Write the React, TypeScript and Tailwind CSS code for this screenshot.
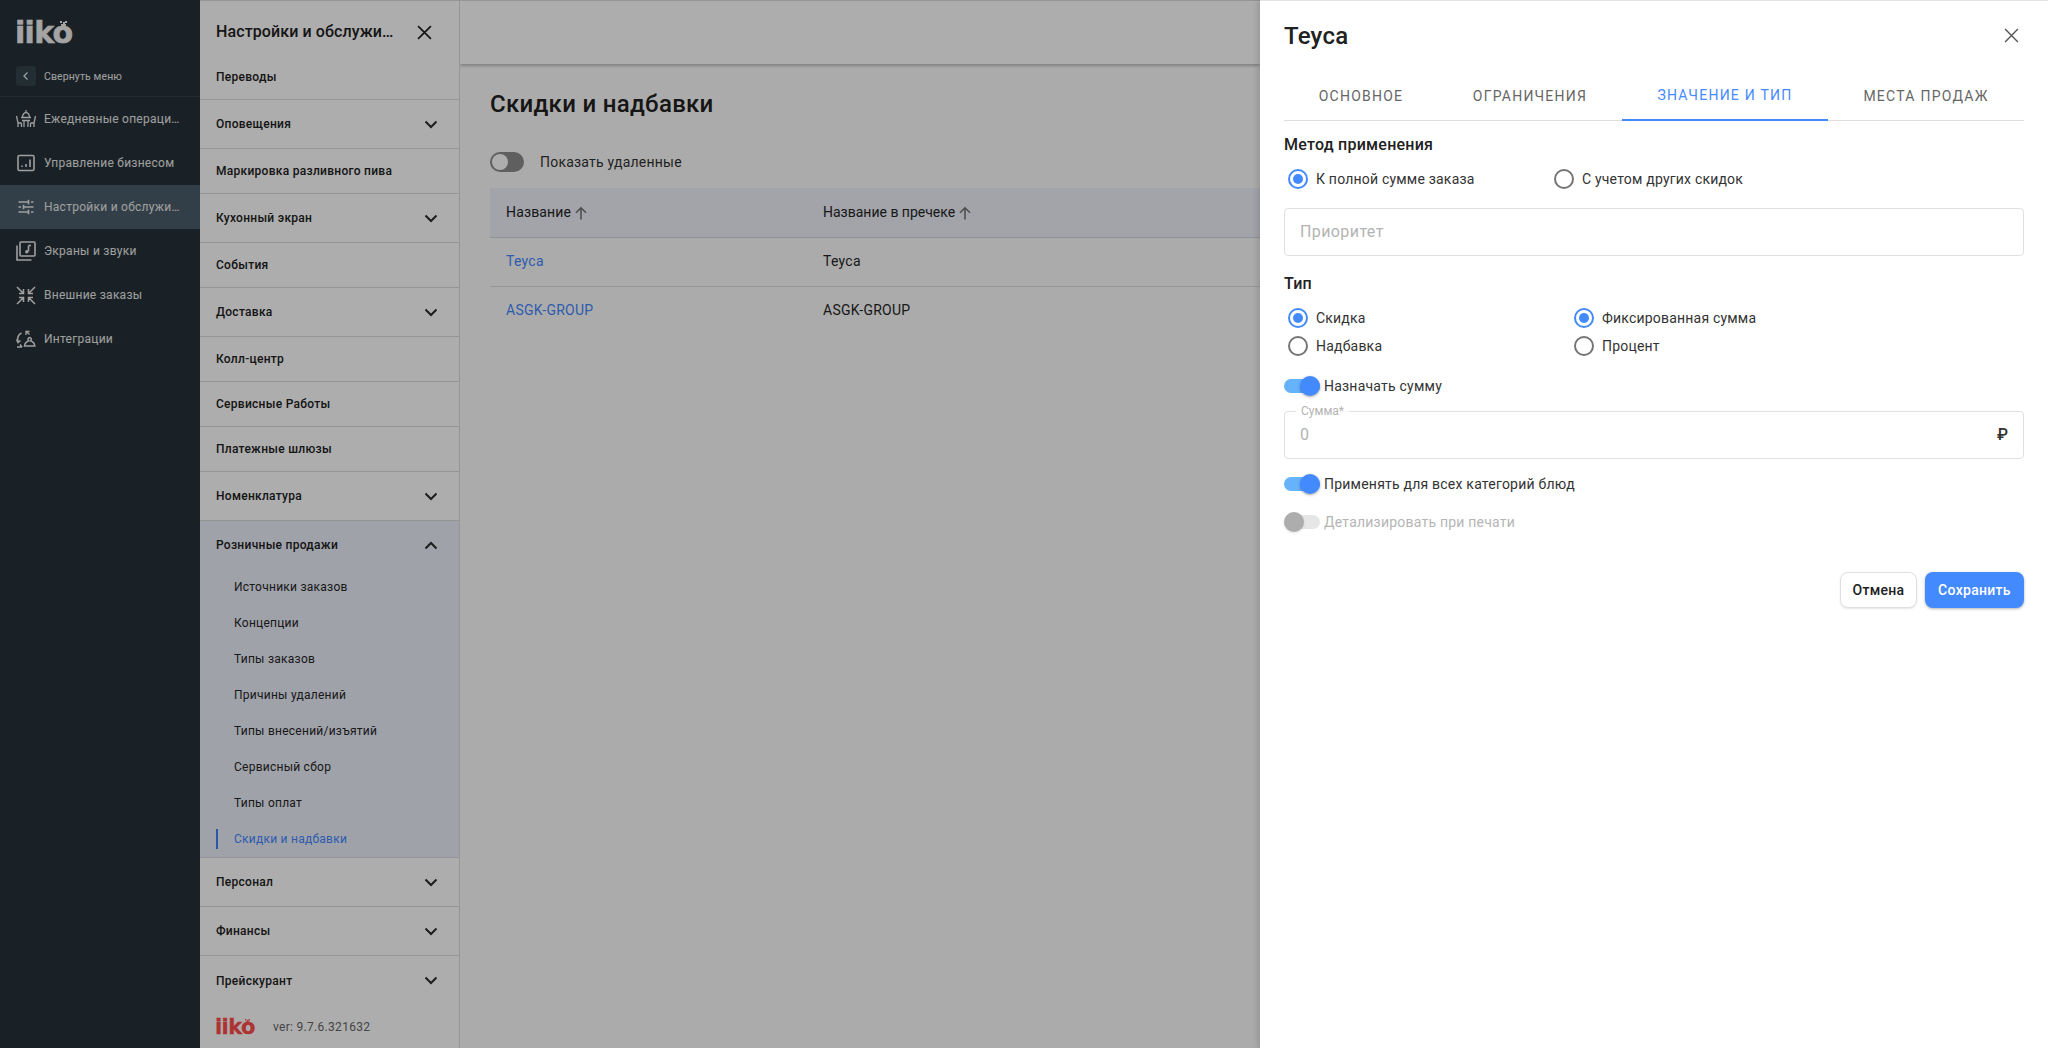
import React from "react";

function Logo({ small }: { small?: boolean }) {
  return (
    <div className={small ? "relative h-[16px] w-[38px] flex-none text-[#ff4c4c]" : "relative h-[24px] w-[57px] flex-none text-[#f2f2f2]"}>
      <span
        className={
          small
            ? "absolute -left-[1px] bottom-[-3px] text-[21px] leading-none font-bold font-['DejaVu_Sans'] tracking-[-0.6px] [-webkit-text-stroke:0.3px_currentColor]"
            : "absolute -left-[1px] bottom-[-4px] text-[30px] leading-none font-bold font-['DejaVu_Sans'] tracking-[-0.7px] [-webkit-text-stroke:0.5px_currentColor]"
        }
      >
        iiko
      </span>
      <svg className={small ? "absolute right-[4px] top-0" : "absolute right-[6px] top-[1px]"} width={small ? 5 : 7} height={small ? 6 : 8} viewBox="0 0 7 8" fill="currentColor">
        <rect x="0" y="0" width="2" height="2" /><rect x="3" y="1" width="2" height="2" /><rect x="5" y="0" width="2" height="2" />
        <rect x="1" y="3" width="5" height="2" /><rect x="2" y="5" width="3" height="3" />
      </svg>
    </div>
  );
}

const ic = { width: 20, height: 20, viewBox: "0 0 20 20", fill: "none", stroke: "currentColor", strokeWidth: 1.3 } as const;

const Icons: React.ReactNode[] = [
  <svg {...{ ...ic, width: 22, height: 22, viewBox: "0 0 22 22" }}>
    <path d="M11 2v2M7.5 9c0-2 1.5-4.5 3.5-4.5S14.5 7 14.5 9M6 9.5h10M7 12.5h8M1.5 8l1.5 7h3.5M20.5 8L19 15h-3.5M3 15v4M6.5 15v4M15.5 15v4M19 15v4M9 13v6M13 13v6" />
  </svg>,
  <svg {...ic}>
    <rect x="2" y="2.5" width="16" height="15" rx="1.5" strokeWidth="1.6" />
    <path d="M6 14v-1.5M10 14V11M14 14V6.5" strokeWidth="1.6" />
  </svg>,
  <svg {...ic}>
    <path d="M2.5 5h10M15 5h2.5M12.5 2.8v4.4M2.5 10h2.5M8 10h9.5M7.5 7.8v4.4M2.5 15h10M15 15h2.5M12.5 12.8v4.4" strokeWidth="1.6" />
  </svg>,
  <svg {...{ ...ic, width: 22, height: 22, viewBox: "0 0 22 22" }}>
    <rect x="5" y="2" width="15" height="14" rx="1" strokeWidth="1.6" />
    <path d="M2 5.5V20h14.5" strokeWidth="1.6" />
    <path d="M13.5 5.5v6" strokeWidth="1.6" />
    <path d="M13.5 5.5h2.5" strokeWidth="1.6" />
    <circle cx="11.8" cy="11.8" r="1.7" fill="currentColor" stroke="none" />
  </svg>,
  <svg {...{ ...ic, width: 22, height: 22, viewBox: "0 0 22 22" }}>
    <path d="M2 3l6.5 6.5M8.5 5v4.5H4M20 3l-6.5 6.5M13.5 5v4.5H18M2 20l6.5-6.5M8.5 18v-4.5H4M20 20l-6.5-6.5M13.5 18v-4.5H18" strokeWidth="1.5" />
  </svg>,
  <svg {...{ ...ic, width: 22, height: 22, viewBox: "0 0 22 22" }}>
    <path d="M6.5 5C3.5 6.5 2 10 3 14M1.5 11.5L3 14.5l2.5-2M2 19h5M7 19l-2-2.5" strokeWidth="1.5" />
    <path d="M11 7V3.5h3.5M11 3.5l3.5 3" strokeWidth="1.3" />
    <path d="M14.5 9.5a1.8 1.8 0 0 1 1 3.3c2.2.7 4 2.4 4.3 5.2H9.5c.3-2.8 2.1-4.5 4.3-5.2a1.8 1.8 0 0 1 .7-3.3z" strokeWidth="1.5" />
  </svg>,
];

const Chevron = ({ up }: { up?: boolean }) => (
  <svg width="14" height="9" viewBox="0 0 14 9" fill="none" stroke="#2b2b2b" strokeWidth="2">
    <path d={up ? "M1.5 7.5L7 2l5.5 5.5" : "M1.5 1.5L7 7l5.5-5.5"} />
  </svg>
);

const Cross = ({ size, stroke, w }: { size: number; stroke: string; w: number }) => (
  <svg width={size} height={size} viewBox="0 0 14 14" fill="none" stroke={stroke} strokeWidth={w}>
    <path d="M1 1l12 12M13 1L1 13" />
  </svg>
);

const Arrow = () => (
  <svg width="12" height="14" viewBox="0 0 12 14" fill="none" stroke="#757575" strokeWidth="1.6">
    <path d="M6 13.5V2M1 6.8L6 1.8l5 5" />
  </svg>
);

function Row({ label, chev, last }: { label: string; chev?: boolean; last?: boolean }) {
  return (
    <div className={`flex items-center justify-between pl-4 pr-[21px] flex-none ${chev ? "h-[49px]" : "h-[45px]"} ${last ? "" : "border-b border-[#dcdcdc]"}`}>
      <span className="text-[12px] font-medium tracking-[0.28px] text-[#212121]">{label}</span>
      {chev && <Chevron />}
    </div>
  );
}

function Radio({ on, label }: { on?: boolean; label: string }) {
  return (
    <div className="flex items-center h-7">
      <div className="w-7 h-7 flex items-center justify-center">
        <div className={`w-5 h-5 rounded-full border-2 flex items-center justify-center ${on ? "border-[#448aff]" : "border-[#757575]"}`}>
          {on && <div className="w-[10px] h-[10px] rounded-full bg-[#448aff]" />}
        </div>
      </div>
      <span className="ml-[4px] text-[14px] text-[#333] tracking-[0.2px]">{label}</span>
    </div>
  );
}

function Switch({ label, disabled }: { label: string; disabled?: boolean }) {
  return (
    <div className="flex items-center h-6">
      <div className={`w-9 h-[14px] rounded-full flex items-center ${disabled ? "bg-[#e6e6e6] justify-start" : "bg-[#66b3fb] justify-end"}`}>
        <div className={`w-5 h-5 rounded-full flex-none ${disabled ? "bg-[#adadad] shadow-sm" : "bg-[#448aff] shadow-[0_1px_3px_rgba(0,0,0,0.35)]"}`} />
      </div>
      <span className={`ml-[4px] text-[14px] tracking-[0.22px] ${disabled ? "text-[#b5b5b5]" : "text-[#333]"}`}>{label}</span>
    </div>
  );
}

const rail = ["Ежедневные операци…", "Управление бизнесом", "Настройки и обслужи…", "Экраны и звуки", "Внешние заказы", "Интеграции"];
const sub = ["Источники заказов", "Концепции", "Типы заказов", "Причины удалений", "Типы внесений/изъятий", "Сервисный сбор", "Типы оплат"];

export default function App() {
  return (
    <div className="flex w-[2048px] h-[1048px] overflow-hidden bg-white font-['Roboto','Liberation_Sans',sans-serif]">
      <div className="relative flex w-[1260px] flex-none h-full">
        {/* rail */}
        <aside className="w-[200px] flex-none bg-[#263238] flex flex-col text-[#eaeaea]">
          <div className="h-[66px] pl-4 pt-5 flex-none">
            <Logo />
          </div>
          <div className="h-[31px] flex-none border-b border-[#33434b] pl-4 flex items-start">
            <div className="w-5 h-5 rounded-[3px] bg-[#33454d] flex items-center justify-center">
              <svg width="8" height="10" viewBox="0 0 8 10" fill="none" stroke="#e8e8e8" strokeWidth="1.3"><path d="M5.5 1.5L2 5l3.5 3.5" /></svg>
            </div>
            <span className="ml-2 text-[10.5px] leading-5 pt-[1px] tracking-[0.1px]">Свернуть меню</span>
          </div>
          {rail.map((t, i) => (
            <div key={t} className={`h-[44px] flex-none flex items-center pl-4 ${i === 2 ? "bg-[#4b5e6b]" : ""}`}>
              <div className="w-[22px] h-[22px] flex items-center justify-center flex-none -ml-[1px] mr-[7px]">{Icons[i]}</div>
              <span className="whitespace-nowrap text-[12px] tracking-[0.26px]">{t}</span>
            </div>
          ))}
        </aside>

        {/* settings panel */}
        <nav className="w-[260px] flex-none bg-white border-r border-[#dcdcdc] border-t flex flex-col">
          <div className="h-[54px] flex-none flex items-center pt-2 pl-4 pr-[27px]">
            <span className="whitespace-nowrap text-[16px] font-medium tracking-[0.1px] text-[#212121]">Настройки и обслужи…</span>
            <div className="ml-auto"><Cross size={15} stroke="#212121" w={1.6} /></div>
          </div>
          <Row label="Переводы" />
          <Row label="Оповещения" chev />
          <Row label="Маркировка разливного пива" />
          <Row label="Кухонный экран" chev />
          <Row label="События" />
          <Row label="Доставка" chev />
          <Row label="Колл-центр" />
          <Row label="Сервисные Работы" />
          <Row label="Платежные шлюзы" />
          <Row label="Номенклатура" chev />
          <div className="flex-none bg-[#ebeffa] border-b border-[#dcdcdc]">
            <div className="h-[48px] flex items-center justify-between pl-4 pr-[21px]">
              <span className="text-[12px] font-medium tracking-[0.28px] text-[#212121]">Розничные продажи</span>
              <Chevron up />
            </div>
            {sub.map((s) => (
              <div key={s} className="h-9 flex items-center pl-[34px] text-[12px] tracking-[0.25px] text-[#262626]">{s}</div>
            ))}
            <div className="h-9 flex items-center pl-4">
              <div className="h-5 border-l-2 border-[#3f7ff0] pl-4 flex items-center text-[12px] tracking-[0.25px] text-[#4488ff]">Скидки и надбавки</div>
            </div>
          </div>
          <Row label="Персонал" chev />
          <Row label="Финансы" chev />
          <Row label="Прейскурант" chev last />
          <div className="flex-1 flex items-center pl-4">
            <Logo small />
            <span className="ml-[19px] text-[12px] tracking-[0.3px] text-[#666]">ver: 9.7.6.321632</span>
          </div>
        </nav>

        {/* main */}
        <main className="flex-1 min-w-0 bg-[#fdfdfd] overflow-hidden border-t border-[#dcdcdc] flex flex-col">
          <div className="h-[63px] flex-none bg-white shadow-[0_2px_3px_rgba(0,0,0,0.25)]" />
          <div className="pl-[30px] flex flex-col">
            <h1 className="mt-[23px] h-[34px] leading-[34px] text-[24px] font-medium tracking-[0.3px] text-[#212121]">Скидки и надбавки</h1>
            <div className="mt-[31px] h-5 flex items-center">
              <div className="w-[34px] h-5 rounded-full bg-[#8c8c8c] flex items-center pl-[2px] flex-none">
                <div className="w-4 h-4 rounded-full bg-white" />
              </div>
              <span className="ml-4 text-[14px] tracking-[0.22px] text-[#333]">Показать удаленные</span>
            </div>
            <div className="mt-4 w-[1500px] flex-none text-[14px] tracking-[0.25px]">
              <div className="h-[50px] bg-[#eff2fb] border-b border-[#d5d8e0] flex items-center text-[#262626]">
                <div className="w-[333px] pl-4 flex items-center gap-1 flex-none tracking-[0.15px]">Название <Arrow /></div>
                <div className="flex items-center gap-1 tracking-[0px]">Название в пречеке <Arrow /></div>
              </div>
              <div className="h-[49px] pb-[1px] border-b border-[#dcdcdc] flex items-center text-[#262626]">
                <div className="w-[333px] pl-4 flex-none text-[#4488ff]">Teyca</div>
                <div>Teyca</div>
              </div>
              <div className="h-[49px] pb-[3px] flex items-center text-[#262626]">
                <div className="w-[333px] pl-4 flex-none text-[#4488ff]">ASGK-GROUP</div>
                <div>ASGK-GROUP</div>
              </div>
            </div>
          </div>
        </main>

        <div className="absolute inset-0 bg-[rgba(0,0,0,0.32)]" />
      </div>

      {/* drawer */}
      <section className="w-[788px] flex-none bg-white border-t border-[#e4e4e4] px-6 flex flex-col shadow-[-2px_0_6px_rgba(0,0,0,0.15)] z-10">
        <div className="h-[69px] flex-none flex items-center justify-between pr-[5px]">
          <h2 className="text-[24px] font-medium tracking-[0.2px] text-[#212121]">Teyca</h2>
          <Cross size={15} stroke="#555" w={1.3} />
        </div>
        <div className="h-[51px] flex-none flex border-b border-[#dedede] text-[14px] tracking-[1.25px]">
          <div className="w-[154px] h-[50px] pt-[2px] flex items-center justify-center text-[#666]">ОСНОВНОЕ</div>
          <div className="w-[184px] h-[50px] pt-[2px] flex items-center justify-center text-[#666]">ОГРАНИЧЕНИЯ</div>
          <div className="w-[206px] h-[51px] pt-[2px] flex items-center justify-center text-[#448aff] border-b-2 border-[#448aff]">ЗНАЧЕНИЕ И ТИП</div>
          <div className="w-[196px] h-[50px] pt-[2px] flex items-center justify-center text-[#666]">МЕСТА ПРОДАЖ</div>
        </div>
        <h3 className="mt-[14px] h-5 leading-5 text-[16px] font-medium tracking-[0.25px] text-[#212121]">Метод применения</h3>
        <div className="mt-[10px] flex">
          <div className="w-[266px]"><Radio on label="К полной сумме заказа" /></div>
          <Radio label="С учетом других скидок" />
        </div>
        <div className="mt-[15px] h-12 border border-[#e0e0e0] rounded flex items-center px-[15px] text-[16px] text-[#b3b3b3] tracking-[0.4px]">Приоритет</div>
        <h3 className="mt-[18px] h-5 leading-5 text-[16px] font-medium tracking-[0.25px] text-[#212121]">Тип</h3>
        <div className="mt-[10px] flex">
          <div className="w-[286px] flex flex-col"><Radio on label="Скидка" /><Radio label="Надбавка" /></div>
          <div className="flex flex-col"><Radio on label="Фиксированная сумма" /><Radio label="Процент" /></div>
        </div>
        <div className="mt-[14px]"><Switch label="Назначать сумму" /></div>
        <div className="relative mt-[13px] h-12 flex-none border border-[#e0e0e0] rounded px-[15px] flex items-center justify-between">
          <span className="absolute left-[11px] -top-[7px] bg-white px-[5px] text-[12px] leading-[12px] text-[#b3b3b3]">Сумма*</span>
          <span className="text-[16px] text-[#b3b3b3]">0</span>
          <span className="text-[16px] font-medium text-[#333]">₽</span>
        </div>
        <div className="mt-[13px]"><Switch label="Применять для всех категорий блюд" /></div>
        <div className="mt-[14px]"><Switch disabled label="Детализировать при печати" /></div>
        <div className="mt-[38px] flex justify-end gap-2">
          <button className="w-[77px] h-9 rounded-lg border border-[#e0e0e0] bg-white text-[14px] font-medium text-[#212121] tracking-[0.3px] shadow-[0_1px_2px_rgba(0,0,0,0.1)]">Отмена</button>
          <button className="w-[99px] h-9 rounded-lg bg-[#448aff] text-[14px] font-medium text-white tracking-[0.3px] shadow-[0_1px_3px_rgba(0,0,0,0.3)]">Сохранить</button>
        </div>
      </section>
    </div>
  );
}
